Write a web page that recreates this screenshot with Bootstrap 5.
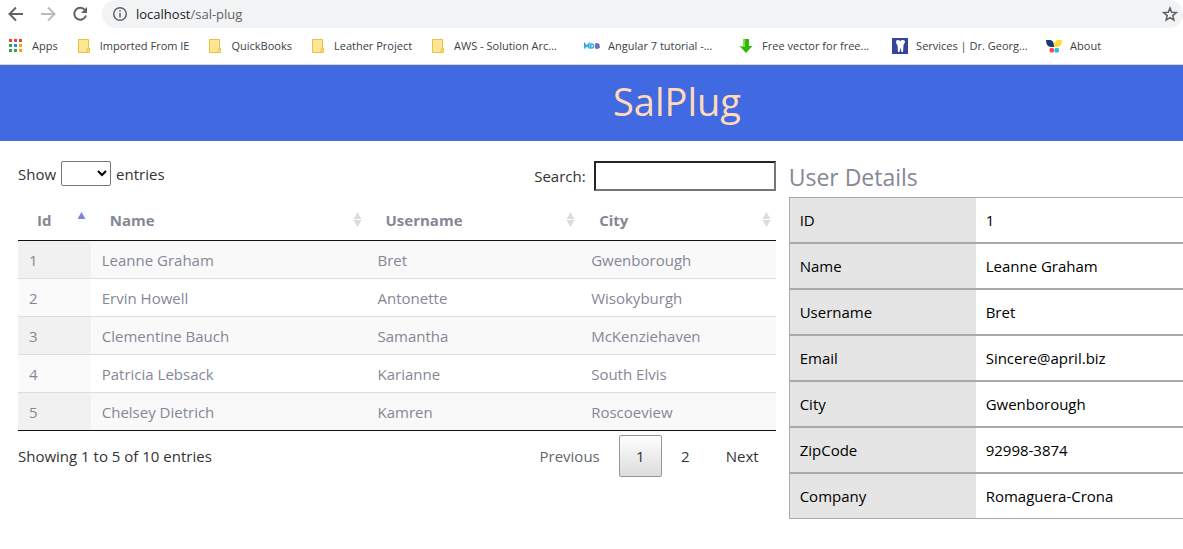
<!DOCTYPE html>
<html lang="en">
<head>
<meta charset="utf-8">
<meta name="viewport" content="width=device-width, initial-scale=1">
<title>SalPlug</title>
<link href="https://cdn.jsdelivr.net/npm/bootstrap@5.3.0/dist/css/bootstrap.min.css" rel="stylesheet">
<style>
body{font-family:"Open Sans","Noto Sans",sans-serif;font-size:15px;line-height:24px;color:#333;background:#fff;overflow-x:hidden}
.toolbar{height:28px;padding-left:8px}
.tool-btn{width:16px;height:16px;padding:0;border:0;background:none;display:flex;margin-right:16px}
.tool-btn svg,.bm svg{display:block;width:16px;height:16px;flex:none}
.omnibox{background:#f1f3f4;border-radius:14px;height:28px;padding:0 5px 0 10px;margin-left:-2px;font-size:13px;color:#5f6368}
.omnibox .host{color:#202124}
.bookmarks{height:37px;padding-left:8px;gap:18px;border-bottom:1px solid #d5d8dc;font-size:11px;line-height:16px}
.bm{display:flex;align-items:center;gap:8px;color:#3c4043;text-decoration:none;white-space:nowrap}
.bm-long{min-width:136px}
.masthead{background:#4169e1;color:#ffdab9;height:76px;padding:0 0 4px 171px}
.masthead h1{font-size:38px;line-height:44px;font-weight:400;margin:0}
.list-pane{padding:20px 13px 0 18px}
.len-select{width:50px;height:25px;margin:0 5px;border:1px solid #767676;border-radius:2px;background:#fff}
.search-box{width:182px;height:30px;border:2px solid;border-color:#212529 #767676 #767676 #212529;background:#fff}
.users{table-layout:fixed;margin-top:9px;color:#858796;border-bottom:1px solid #111;border-collapse:separate;border-spacing:0}
.users th{height:41px;padding:0 19px;border-bottom:1px solid #111;position:relative;font-weight:700}
.users td{height:38px;padding:0 11px;border-bottom:1px solid #ddd}
.users tbody tr:last-child td{border-bottom:0;height:37px}
.users tbody tr:nth-child(odd) td{background:#f9f9f9}
.users tbody tr:nth-child(odd) td:first-child{background:#f1f1f1}
.users tbody tr:nth-child(even) td:first-child{background:#fafafa}
.w-id{width:9.6%}.w-name{width:36.4%}.w-user{width:28.2%}
.sorter{position:absolute;right:5px;top:12px;width:9px;height:15px}
.pager{gap:2px}
.page-btn{height:42px;min-width:43px;padding:0 16px;border:1px solid transparent;border-radius:2px;background:none;color:#333}
.page-btn:disabled{color:#666}
.page-btn.current{border-color:#979797;background:linear-gradient(#fff,#dcdcdc)}
.detail-pane{padding-top:22px}
.detail-title{font-size:23px;line-height:28px;font-weight:400;color:#858796;margin:0 0 6px}
.details{color:#000;border-left:1px solid #a9a9a9;border-collapse:separate;border-spacing:0}
.details th,.details td{height:46px;padding:0 10px;border-top:1px solid #a9a9a9;border-bottom:1px solid #a9a9a9;font-weight:400}
.details th{width:186px;background:#e5e5e5}
</style>
</head>
<body>
<svg class="d-none" xmlns="http://www.w3.org/2000/svg">
<symbol id="folder" viewBox="0 0 16 16"><path d="M2.500 1.500H12.500V10.500H13.500V14.500H2.500Z" fill="#ffe694" stroke="#e8c142"/><path d="M11 14V11h2" fill="none" stroke="#e8c142"/></symbol>
<symbol id="sort" viewBox="0 0 9 15"><path d="M4.500 0 8.500 7H.5ZM4.500 15 8.500 8H.5Z" fill="#dcdcdc"/></symbol>
</svg>
<nav aria-label="Browser">
<div class="toolbar d-flex align-items-center">
<button class="tool-btn" aria-label="Back"><svg viewBox="0 0 16 16" fill="none" stroke="#5f6368" stroke-width="2"><path d="M15 8H2M8 1.500 1.500 8 8 14.500"/></svg></button>
<button class="tool-btn" aria-label="Forward"><svg viewBox="0 0 16 16" fill="none" stroke="#babcbe" stroke-width="2"><path d="M1 8h13M8 1.500 14.500 8 8 14.500"/></svg></button>
<button class="tool-btn" aria-label="Reload"><svg viewBox="0 0 16 16" fill="none" stroke="#5f6368" stroke-width="2"><path d="M13 4A6 6 0 1 0 14 9.500"/><path d="M15 1v6H9z" fill="#5f6368" stroke="none"/></svg></button>
<div class="omnibox d-flex align-items-center flex-grow-1">
<svg width="16" height="16" viewBox="0 0 16 16" fill="none" stroke="#5f6368" stroke-width="1.500"><circle cx="8" cy="8" r="6.300"/><path d="M8 7v4.500M8 4.300v1.500"/></svg>
<span class="ms-2 flex-grow-1"><span class="host">localhost</span>/sal-plug</span>
<button class="tool-btn m-0" aria-label="Bookmark this page"><svg viewBox="0 0 16 16" fill="none" stroke="#5f6368" stroke-width="1.500"><path d="m8 2 1.700 4.300 4.600.3-3.500 3 1.100 4.500L8 11.700l-3.900 2.400 1.100-4.500-3.500-3 4.600-.3z"/></svg></button>
</div>
</div>
<div class="bookmarks d-flex align-items-center">
<a class="bm" href="#"><svg viewBox="0 0 16 16"><path fill="#ea4335" d="M1 1h3v3H1zM6 1h3v3H6zM11 1h3v3h-3z"/><path fill="#34a05a" d="M1 6h3v3H1zM1 11h3v3H1z"/><path fill="#1a8cff" d="M6 6h3v3H6z"/><path fill="#f5a300" d="M11 6h3v3h-3zM11 11h3v3h-3z"/><path fill="#34a05a" d="M6 11h3v3H6z"/></svg>Apps</a>
<a class="bm" href="#"><svg><use href="#folder"/></svg>Imported From IE</a>
<a class="bm" href="#"><svg><use href="#folder"/></svg>QuickBooks</a>
<a class="bm" href="#"><svg><use href="#folder"/></svg>Leather Project</a>
<a class="bm bm-long" href="#"><svg><use href="#folder"/></svg>AWS - Solution Arc...</a>
<a class="bm bm-long" href="#"><svg viewBox="0 0 16 16" fill="none" stroke-width="1.600"><path d="M.8 10.500V6L2.800 8.500l2-2.500v4.500" stroke="#2fa8dc"/><path d="M6.800 6h1q1.800 0 1.800 2T7.800 10H6.800z" stroke="#3fb2e3"/><path d="M12 6h1.600q1.200 0 1.200 1T13.600 8H12h1.800q1.300 0 1.300 1T13.800 10H12z" stroke="#6554c0"/></svg>Angular 7 tutorial -...</a>
<a class="bm bm-long" href="#"><svg viewBox="0 0 16 16"><path d="M5 1h6v7h3.500L8 15 1.500 8H5z" fill="#35b50c"/><path d="M5 1h2v8H3L1.500 8H5z" fill="#83dc42"/></svg>Free vector for free...</a>
<a class="bm bm-long" href="#"><svg viewBox="0 0 16 16"><path fill="#33459a" d="M0 0h16v16H0z"/><path fill="#fff" d="M4 3q2-2 4 0 3-2 5 0 0 2-1.500 4L11 14H9.500L8.500 9.500 7.500 14H6L5.500 7Q4 6 4 3z"/></svg>Services | Dr. Georg...</a>
<a class="bm" href="#"><svg viewBox="0 0 16 16"><path fill="#183b70" d="M0 2h4q4 0 4 7H5Q0 9 0 2z"/><path fill="#ffdf2b" d="M16 2h-4Q8 2 8 9h3q5 0 5-7z"/><rect x="3.500" y="10" width="4.500" height="4.500" rx="1.500" fill="#f2495c"/><rect x="8.500" y="10" width="4.500" height="4.500" rx="1.500" fill="#28b9ed"/></svg>About</a>
</div>
</nav>
<header class="masthead d-flex align-items-center justify-content-center"><h1>SalPlug</h1></header>
<main class="row g-0">
<section class="col-8 list-pane">
<div class="d-flex justify-content-between align-items-start">
<label class="d-flex align-items-center">Show<select class="len-select" aria-label="Entries per page"><option></option></select>entries</label>
<label class="d-flex align-items-center gap-2">Search:<input type="search" class="search-box"></label>
</div>
<table class="users w-100">
<thead><tr>
<th class="w-id" aria-sort="ascending">Id<svg class="sorter" viewBox="0 0 9 15"><path d="M4.500 0 8.500 7H.5Z" fill="#7f83dd"/></svg></th>
<th class="w-name">Name<svg class="sorter"><use href="#sort"/></svg></th>
<th class="w-user">Username<svg class="sorter"><use href="#sort"/></svg></th>
<th>City<svg class="sorter"><use href="#sort"/></svg></th>
</tr></thead>
<tbody>
<tr><td>1</td><td>Leanne Graham</td><td>Bret</td><td>Gwenborough</td></tr>
<tr><td>2</td><td>Ervin Howell</td><td>Antonette</td><td>Wisokyburgh</td></tr>
<tr><td>3</td><td>Clementine Bauch</td><td>Samantha</td><td>McKenziehaven</td></tr>
<tr><td>4</td><td>Patricia Lebsack</td><td>Karianne</td><td>South Elvis</td></tr>
<tr><td>5</td><td>Chelsey Dietrich</td><td>Kamren</td><td>Roscoeview</td></tr>
</tbody>
</table>
<div class="d-flex justify-content-between align-items-center pt-1">
<div>Showing 1 to 5 of 10 entries</div>
<div class="pager d-flex"><button class="page-btn" disabled>Previous</button><button class="page-btn current">1</button><button class="page-btn">2</button><button class="page-btn">Next</button></div>
</div>
</section>
<section class="col-4 detail-pane">
<h2 class="detail-title">User Details</h2>
<table class="details w-100">
<tr><th scope="row">ID</th><td>1</td></tr>
<tr><th scope="row">Name</th><td>Leanne Graham</td></tr>
<tr><th scope="row">Username</th><td>Bret</td></tr>
<tr><th scope="row">Email</th><td>Sincere@april.biz</td></tr>
<tr><th scope="row">City</th><td>Gwenborough</td></tr>
<tr><th scope="row">ZipCode</th><td>92998-3874</td></tr>
<tr><th scope="row">Company</th><td>Romaguera-Crona</td></tr>
</table>
</section>
</main>
<script src="https://cdn.jsdelivr.net/npm/bootstrap@5.3.0/dist/js/bootstrap.bundle.min.js"></script>
</body>
</html>
